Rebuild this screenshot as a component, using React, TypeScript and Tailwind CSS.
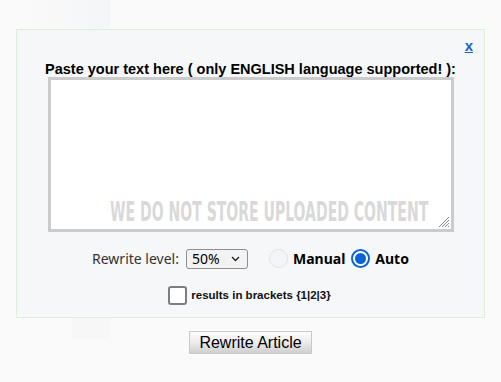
export default function App() {
  return (
    <div className="relative min-h-[382px] w-[501px] bg-[#fafafa] pt-[29px] font-['Liberation_Sans',Arial,sans-serif]">
      <div className="absolute left-[27px] top-0 h-[29px] w-[83px] bg-gradient-to-r from-[#fafafa] to-[#f4f5f7]" />
      <div className="absolute left-[72px] top-[318px] h-[21px] w-[38px] bg-[#f7f7f7]" />

      <div className="relative mx-[16px] flex h-[289px] flex-col items-center border border-[#dcefd8] bg-[#f6f7f9]">
        <a
          href="#"
          className="absolute right-[11px] top-[8px] text-[15px] font-bold leading-none text-[#1a5fd0] underline"
        >
          x
        </a>

        <h2 className="mt-[31px] whitespace-nowrap text-[14.5px] font-bold leading-[16px] text-black">
          Paste your text here ( only ENGLISH language supported! ):
        </h2>

        <div className="relative h-[155px] w-[406px] border-[3px] border-[#cbcbcb] bg-white">
          <span className="absolute bottom-[4px] right-[22px] origin-right scale-x-[0.6] whitespace-nowrap font-['DejaVu_Sans_Condensed','DejaVu_Sans',sans-serif] text-[26px] font-bold leading-none text-[#d9d9d9]">
            WE DO NOT STORE UPLOADED CONTENT
          </span>
          <svg
            className="absolute bottom-[1px] right-[1px]"
            width="14"
            height="14"
            viewBox="0 0 14 14"
          >
            <path
              d="M13 3 L3 13 M13 6 L6 13 M13 9 L9 13 M13 12 L12 13"
              stroke="#8a8a8a"
              strokeWidth="1"
            />
          </svg>
        </div>

        <div className="mt-[16px] flex items-center font-['Noto_Sans',sans-serif] text-[14px]">
          <span className="mr-[7px] text-[#333]">Rewrite level:</span>
          <div className="flex h-[20px] w-[62px] items-center justify-between rounded-[3px] border border-[#8f8f8f] bg-[#f3f3f3] pl-[5px] pr-[7px] text-black">
            <span className="leading-none">50%</span>
            <svg width="9" height="6" viewBox="0 0 9 6">
              <path d="M1 1 L4.5 4.5 L8 1" stroke="#222" strokeWidth="1.4" fill="none" />
            </svg>
          </div>

          <span className="ml-[21px] h-[19px] w-[19px] rounded-full border border-[#e3e3e3] bg-[#f5f5f5]" />
          <span className="ml-[5px] font-bold text-black">Manual</span>

          <span className="ml-[6px] flex h-[19px] w-[19px] items-center justify-center rounded-full border-[2px] border-[#0b63d6] bg-white">
            <span className="h-[11px] w-[11px] rounded-full bg-[#0b63d6]" />
          </span>
          <span className="ml-[5px] font-bold text-black">Auto</span>
        </div>

        <div className="mt-[17px] flex items-center pr-[2px]">
          <span className="h-[19px] w-[19px] rounded-[3px] border-2 border-[#7d7d85] bg-white" />
          <span className="ml-[4px] text-[11.5px] font-bold text-[#111]">
            results in brackets {"{1|2|3}"}
          </span>
        </div>
      </div>

      <div className="mt-[13px] flex justify-center">
        <button
          type="button"
          className="h-[23px] w-[123px] border border-[#c9c9c9] bg-gradient-to-b from-[#fdfdfd] via-[#ececec] to-[#cfcfcf] text-[16px] leading-none text-black"
        >
          Rewrite Article
        </button>
      </div>
    </div>
  );
}
